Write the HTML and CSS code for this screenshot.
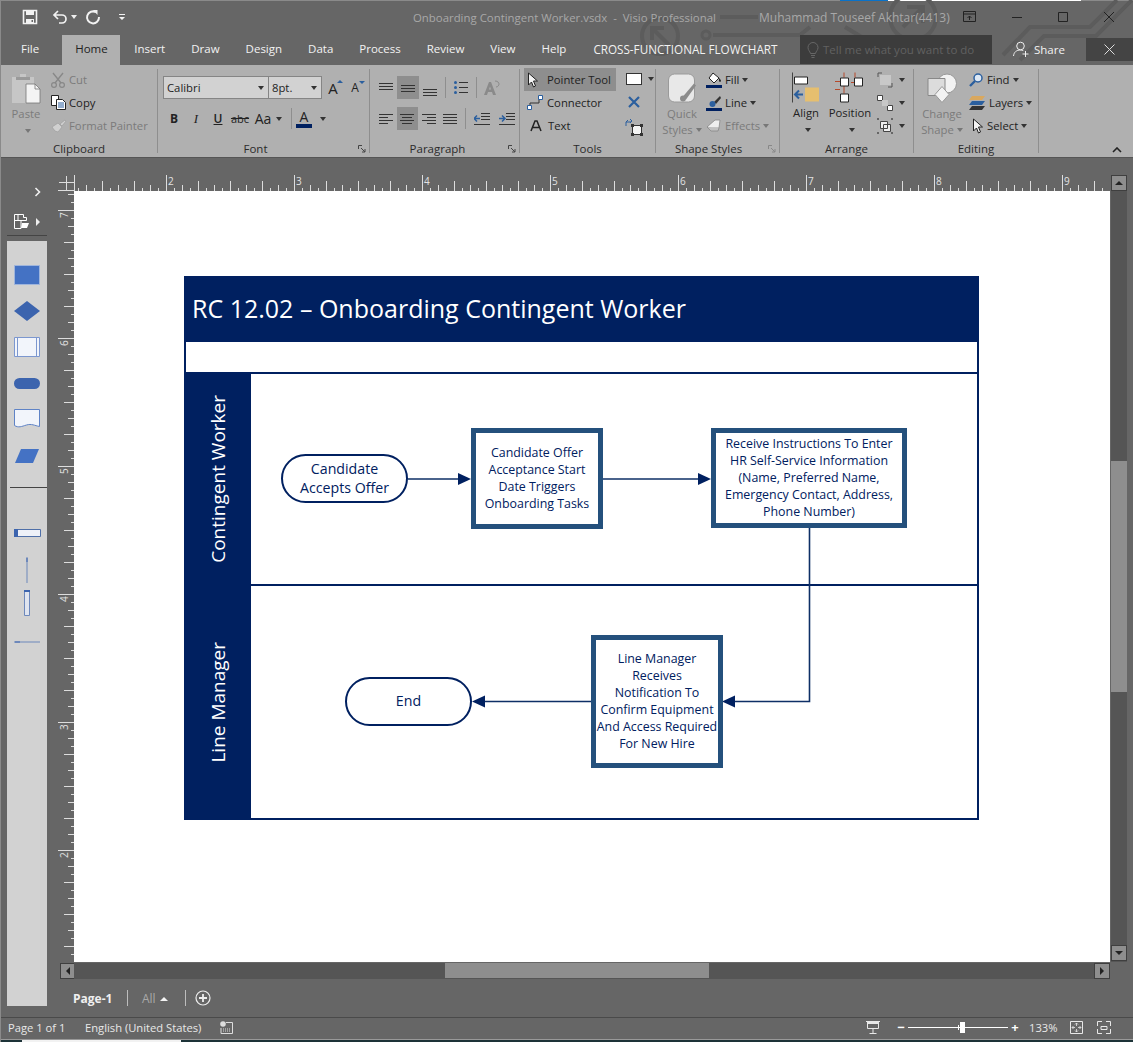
FILE: index.html
```html
<!DOCTYPE html>
<html lang="en">
<head>
    <meta charset="UTF-8">
    <title>Onboarding Contingent Worker.vsdx - Visio Professional</title>
    <link rel="stylesheet" href="styles.css">
</head>
<body>
<div class="app">
    <!-- title bar + tabs share the circuit pattern -->
    <header class="top">
        <svg class="circuit" width="1133" height="65" viewBox="0 0 1133 65">
            <g fill="none" stroke="#5c5c5c" stroke-width="4">
                <circle cx="660" cy="36" r="18"/>
                <path d="M669 45L654 30M652 40V28h12"/>
                <path d="M713 35h87l10-8M845 27l25 15M720 17h38"/>
                <circle cx="706" cy="35" r="4" stroke-width="3"/>
                <circle cx="913" cy="17" r="23"/>
                <path d="M903 27l20-20M907 7h16v16"/>
                <path d="M1003 55l27-28h60l27-27M1020 60l24-24h52l36-36"/>
            </g>
        </svg>
        <div class="titlebar">
            <div class="qat">
                <svg class="qat-save" width="16" height="16" viewBox="0 0 16 16"><path d="M1.500 1.500h13v13h-13z" fill="none" stroke="#f2f2f2" stroke-width="1.600"/><path d="M4 2h8v4H4zM4 10h8v4H4z" fill="#f2f2f2"/><path d="M9.500 11h1.500v2H9.500z" fill="#666"/></svg>
                <svg class="qat-undo" width="16" height="16" viewBox="0 0 16 16"><path d="M6 2L2 6l4 4M2 6h8a4 4 0 0 1 0 8H7" fill="none" stroke="#f2f2f2" stroke-width="1.700"/></svg>
                <span class="caret caret-light qat-caret"></span>
                <svg class="qat-redo" width="16" height="16" viewBox="0 0 16 16"><path d="M11 3.200A6 6 0 1 0 14 8" fill="none" stroke="#f2f2f2" stroke-width="2"/><path d="M8 1h4.500v5z" fill="#f2f2f2"/></svg>
                <svg class="qat-more" width="8" height="8" viewBox="0 0 8 8"><path d="M1 1h6v1H1zM1 4h6L4 7z" fill="#f2f2f2"/></svg>
            </div>
            <div class="doc-title">Onboarding Contingent Worker.vsdx&nbsp; - &nbsp;Visio Professional</div>
            <div class="user">Muhammad Touseef Akhtar(4413)</div>
            <div class="win-btns">
                <svg width="14" height="12" viewBox="0 0 14 12"><path d="M.5.500h12v10H.500zM.5 3h12M6.500 9V5M4.500 7l2-2 2 2" fill="none" stroke="#222" stroke-width="1"/></svg>
                <svg width="12" height="12" viewBox="0 0 12 12"><path d="M1 6.500h10" stroke="#222" stroke-width="1"/></svg>
                <svg width="12" height="12" viewBox="0 0 12 12"><path d="M1.500 1.500h9v9h-9z" fill="none" stroke="#222" stroke-width="1"/></svg>
                <svg width="12" height="12" viewBox="0 0 12 12"><path d="M1 1l10 10M11 1L1 11" stroke="#222" stroke-width="1"/></svg>
            </div>
        </div>
        <nav class="tabs">
            <a class="tab tab-file">File</a>
            <a class="tab tab-on">Home</a>
            <a class="tab">Insert</a>
            <a class="tab">Draw</a>
            <a class="tab">Design</a>
            <a class="tab">Data</a>
            <a class="tab">Process</a>
            <a class="tab">Review</a>
            <a class="tab">View</a>
            <a class="tab">Help</a>
            <a class="tab tab-ctx">CROSS-FUNCTIONAL FLOWCHART</a>
            <div class="tellme">
                <svg width="16" height="18" viewBox="0 0 16 18"><path d="M5.500 12.500C5 10 3 9.500 3 6.500a5 5 0 0 1 10 0c0 3-2 3.500-2.500 6zM6 14.500h4M6.500 16.500h3" fill="none" stroke="#666" stroke-width="1"/></svg>
                <span>Tell me what you want to do</span>
            </div>
            <div class="share">
                <svg width="17" height="17" viewBox="0 0 17 17"><circle cx="7.500" cy="5" r="3.800" fill="none" stroke="#f0f0f0" stroke-width="1"/><path d="M.5 15c.5-4 3-6 7-6 1 0 2 .2 2.800.6M12.500 10v6M9.500 13h6" fill="none" stroke="#f0f0f0" stroke-width="1"/></svg>
                <span>Share</span>
            </div>
            <div class="ribbon-close"><svg width="11" height="11" viewBox="0 0 11 11"><path d="M.5.500l10 10M10.500.500l-10 10" stroke="#ddd" stroke-width="1"/></svg></div>
        </nav>
    </header>

    <section class="ribbon">
        <div class="grp grp-clip">
            <div class="grp-body">
                <div class="big big-paste off">
                    <svg width="30" height="31" viewBox="0 0 30 31"><path d="M1 4h8V1h6v3h8v26H1z" fill="#c6c6c6"/><path d="M5 4h14v3H5z" fill="#9a9a9a"/><path d="M15 11h9l5 5v14H15z" fill="#f4f4f4" stroke="#777" stroke-width=".8"/><path d="M24 11v5h5" fill="none" stroke="#777" stroke-width=".8"/></svg>
                    <span>Paste</span>
                    <span class="caret"></span>
                </div>
                <div class="col col-clip">
                    <div class="cmd off">
                        <svg width="14" height="16" viewBox="0 0 14 16"><path d="M2 1l8 10M12 1L4 11" stroke="#888" stroke-width="1.400" fill="none"/><circle cx="3" cy="13" r="2.400" fill="none" stroke="#888" stroke-width="1.200"/><circle cx="11" cy="13" r="2.400" fill="none" stroke="#888" stroke-width="1.200"/></svg>
                        <span>Cut</span>
                    </div>
                    <div class="cmd">
                        <svg width="15" height="15" viewBox="0 0 15 15"><path d="M.5.500h7v10h-7z" fill="#fff" stroke="#222"/><path d="M5.500 4.500h6l3 3v7h-9z" fill="#fff" stroke="#222"/><path d="M7 8h6M7 10h6M7 12h6" stroke="#2b5f9e"/></svg>
                        <span>Copy</span>
                    </div>
                    <div class="cmd off">
                        <svg width="16" height="14" viewBox="0 0 16 14"><path d="M9 5l5-4 1 1-4 5zM1 8l6-4 4 4-4 5-3-1z" fill="#d0d0d0" stroke="#999" stroke-width=".6"/></svg>
                        <span>Format Painter</span>
                    </div>
                </div>
            </div>
            <div class="grp-name">Clipboard</div>
        </div>

        <div class="grp grp-font">
            <div class="grp-body font-body">
                <div class="font-row1">
                    <div class="combo combo-font">Calibri<span class="caret"></span></div>
                    <div class="combo combo-size">8pt.<span class="caret"></span></div>
                    <span class="grow"><b>A</b><i class="tri-up"></i></span>
                    <span class="grow grow-sm"><b>A</b><i class="tri-dn"></i></span>
                </div>
                <div class="font-row2">
                    <span class="fmt fmt-b">B</span>
                    <span class="fmt fmt-i">I</span>
                    <span class="fmt fmt-u">U</span>
                    <span class="fmt fmt-s">abc</span>
                    <span class="fmt fmt-aa">Aa</span><span class="caret"></span>
                    <span class="vsep"></span>
                    <span class="fmt-color">A</span><span class="caret"></span>
                </div>
            </div>
            <div class="grp-name">Font</div>
            <svg class="launch" width="8" height="8" viewBox="0 0 8 8"><path d="M.5 4V.5H4M3 3l4 4M7 4v3H4" fill="none" stroke="#444"/></svg>
        </div>

        <div class="grp grp-para">
            <div class="grp-body para-body">
                <div class="para-row">
                    <span class="al"><svg width="14" height="16" viewBox="0 0 14 16"><path d="M0 3.500h14M0 6.500h14M0 9.500h14" stroke="#333"/></svg></span>
                    <span class="al al-on"><svg width="14" height="16" viewBox="0 0 14 16"><path d="M0 5.500h14M0 8.500h14M0 11.500h14" stroke="#333"/></svg></span>
                    <span class="al"><svg width="14" height="16" viewBox="0 0 14 16"><path d="M0 9.500h14M0 12.500h14M0 15.500h14" stroke="#333"/></svg></span>
                    <span class="vsep"></span>
                    <span class="al"><svg width="14" height="14" viewBox="0 0 14 14"><path d="M5 1.500h9M5 6.500h9M5 11.500h9" stroke="#333"/><circle cx="1.500" cy="1.500" r="1.500" fill="#2b5f9e"/><circle cx="1.500" cy="6.500" r="1.500" fill="#2b5f9e"/><circle cx="1.500" cy="11.500" r="1.500" fill="#2b5f9e"/></svg></span>
                    <span class="vsep"></span>
                    <span class="al al-rot"><svg width="16" height="16" viewBox="0 0 16 16"><path d="M0 15L5 2h2l5 13h-3l-1-3H4l-1 3zM5 9.500h2L6 6.500z" fill="#8a8a8a"/><path d="M11 1c3 0 4 2 4 3s-1 3-3 3" fill="none" stroke="#8a8a8a"/></svg></span>
                </div>
                <div class="para-row">
                    <span class="al"><svg width="14" height="14" viewBox="0 0 14 14"><path d="M0 2.500h14M0 5.500h9M0 8.500h14M0 11.500h9" stroke="#333"/></svg></span>
                    <span class="al al-on"><svg width="14" height="14" viewBox="0 0 14 14"><path d="M0 2.500h14M2 5.500h10M0 8.500h14M2 11.500h10" stroke="#333"/></svg></span>
                    <span class="al"><svg width="14" height="14" viewBox="0 0 14 14"><path d="M0 2.500h14M5 5.500h9M0 8.500h14M5 11.500h9" stroke="#333"/></svg></span>
                    <span class="al"><svg width="14" height="14" viewBox="0 0 14 14"><path d="M0 2.500h14M0 5.500h14M0 8.500h14M0 11.500h14" stroke="#333"/></svg></span>
                    <span class="vsep"></span>
                    <span class="al al-ind"><svg width="16" height="14" viewBox="0 0 16 14"><path d="M7 1.500h9M7 4.500h9M7 7.500h9M0 12.500h16" stroke="#333"/><path d="M0 6.500h6M3 3.500l-3 3 3 3" fill="none" stroke="#2b5f9e" stroke-width="1.500"/></svg></span>
                    <span class="al al-ind"><svg width="16" height="14" viewBox="0 0 16 14"><path d="M7 1.500h9M7 4.500h9M7 7.500h9M0 12.500h16" stroke="#333"/><path d="M0 6.500h6M3 3.500l3 3-3 3" fill="none" stroke="#2b5f9e" stroke-width="1.500"/></svg></span>
                </div>
            </div>
            <div class="grp-name">Paragraph</div>
            <svg class="launch" width="8" height="8" viewBox="0 0 8 8"><path d="M.5 4V.5H4M3 3l4 4M7 4v3H4" fill="none" stroke="#444"/></svg>
        </div>

        <div class="grp grp-tools">
            <div class="grp-body">
                <div class="col col-tools">
                    <div class="cmd cmd-on">
                        <svg width="12" height="16" viewBox="0 0 12 16"><path d="M1.500 1v12l3-3 2 5 2-1-2-5h4z" fill="#f4f4f4" stroke="#222"/></svg>
                        <span>Pointer Tool</span>
                    </div>
                    <div class="cmd">
                        <svg width="16" height="16" viewBox="0 0 16 16"><path d="M3 12V8h9V4" fill="none" stroke="#333"/><path d="M.5 10.500h4v4h-4zM11.500.500h4v4h-4z" fill="#fff" stroke="#2b5f9e"/></svg>
                        <span>Connector</span>
                    </div>
                    <div class="cmd">
                        <svg width="12" height="12" viewBox="0 0 12 12"><path d="M1 11L5 1h2l4 10M3 7.500h6" fill="none" stroke="#222" stroke-width="1.500"/></svg>
                        <span>Text</span>
                    </div>
                </div>
                <div class="col col-tool2">
                    <div class="swatch-row"><span class="swatch"></span><span class="caret"></span></div>
                    <svg width="14" height="12" viewBox="0 0 14 12"><path d="M2 1l10 10M12 1L2 11" stroke="#2b5f9e" stroke-width="2.200"/></svg>
                    <svg width="18" height="18" viewBox="0 0 18 18"><path d="M7.500 7.500h9v9h-9z" fill="#f4f4f4" stroke="#333"/><path d="M6 6h3v3H6zM15 6h3v3h-3zM6 15h3v3H6zM15 15h3v3h-3z" fill="#333"/><path d="M1 8V4h5M3 2L1 4M5 1l2 2-2 2" fill="none" stroke="#2b5f9e"/></svg>
                </div>
            </div>
            <div class="grp-name">Tools</div>
        </div>

        <div class="grp grp-styles">
            <div class="grp-body">
                <div class="big big-quick off">
                    <svg width="29" height="30" viewBox="0 0 29 30"><rect x=".5" y=".5" width="26" height="28" rx="6" fill="#e8e8e8" stroke="#9a9a9a"/><path d="M26 10L15 23l3 3 10-14z" fill="#8c8c8c"/><circle cx="15" cy="25" r="3" fill="#8c8c8c"/></svg>
                    <span class="big-l1">Quick</span>
                    <span>Styles<i class="caret"></i></span>
                </div>
                <div class="col col-styles">
                    <div class="cmd">
                        <svg width="16" height="16" viewBox="0 0 16 16"><path d="M7 1l6 5-5 5-5-5z" fill="#fff" stroke="#222"/><path d="M13 6c1 1 2 2 2 3 0 1-2 1-2 0z" fill="#222"/><path d="M0 13h16v3H0z" fill="#002060"/></svg>
                        <span>Fill<i class="caret"></i></span>
                    </div>
                    <div class="cmd">
                        <svg width="16" height="16" viewBox="0 0 16 16"><path d="M14 1L8 7l2 2 5-6z" fill="#333"/><circle cx="6.500" cy="9" r="3" fill="#2b5f9e"/><path d="M0 13h16v3H0z" fill="#002060"/></svg>
                        <span>Line<i class="caret"></i></span>
                    </div>
                    <div class="cmd off">
                        <svg width="16" height="14" viewBox="0 0 16 14"><path d="M1 8l8-7h5l-1 8H5z" fill="#eee" stroke="#888" stroke-width=".8"/><path d="M1 8l4 4h7l1-3" fill="#c0c0c0" stroke="#888" stroke-width=".8"/></svg>
                        <span>Effects<i class="caret"></i></span>
                    </div>
                </div>
            </div>
            <div class="grp-name">Shape Styles</div>
            <svg class="launch launch-off" width="8" height="8" viewBox="0 0 8 8"><path d="M.5 4V.5H4M3 3l4 4M7 4v3H4" fill="none" stroke="#888"/></svg>
        </div>

        <div class="grp grp-arrange">
            <div class="grp-body">
                <div class="big big-align">
                    <svg width="28" height="30" viewBox="0 0 28 30"><path d="M.5 0v30" stroke="#444"/><path d="M2.500 4.500h13v7h-13z" fill="#fff" stroke="#222"/><path d="M13 15h14v14H13z" fill="#e6bf6f"/><path d="M3 22h8M7 18l-4 4 4 4" fill="none" stroke="#2b5f9e" stroke-width="2"/></svg>
                    <span>Align</span>
                    <span class="caret"></span>
                </div>
                <div class="big big-pos">
                    <svg width="30" height="30" viewBox="0 0 30 30"><path d="M9 0v5M20 0v5M0 9h5M0 17h5M9 13v8M16 10h4" stroke="#b5482a" fill="none"/><path d="M5.500 5.500h8v8h-8zM19.500 5.500h8v8h-8zM5.500 21.500h8v8h-8z" fill="#fff" stroke="#222"/></svg>
                    <span>Position</span>
                    <span class="caret"></span>
                </div>
                <div class="col col-arr">
                    <div class="mini"><svg width="16" height="16" viewBox="0 0 16 16"><path d="M1 1h4M1 1v4M15 15h-4M15 15v-4" stroke="#555" fill="none"/><path d="M3 3h11v10H3z" fill="#c8c8c8"/></svg><span class="caret"></span></div>
                    <div class="mini"><svg width="16" height="16" viewBox="0 0 16 16"><path d="M.5.500h5v5h-5zM10.500 10.500h5v5h-5z" fill="#fff" stroke="#444"/><path d="M5 5h6v6H5z" fill="#c8c8c8"/></svg><span class="caret"></span></div>
                    <div class="mini"><svg width="16" height="16" viewBox="0 0 16 16"><path d="M3.500 3.500h7v7h-7zM6.500 6.500h7v7h-7z" fill="#eee" stroke="#444"/><path d="M0 0h2v2H0zM14 0h2v2h-2zM0 14h2v2H0zM14 14h2v2h-2z" fill="#666"/></svg><span class="caret"></span></div>
                </div>
            </div>
            <div class="grp-name">Arrange</div>
        </div>

        <div class="grp grp-edit">
            <div class="grp-body">
                <div class="big big-shape off">
                    <svg width="30" height="30" viewBox="0 0 30 30"><circle cx="20" cy="10" r="9.500" fill="#f2f2f2" stroke="#999"/><path d="M1 5h17v17H1z" fill="#dcdcdc" stroke="#888"/><path d="M15 13l7 8-7 8-7-8z" fill="#f2f2f2" stroke="#999"/></svg>
                    <span class="big-l1">Change</span>
                    <span>Shape<i class="caret"></i></span>
                </div>
                <div class="col col-edit">
                    <div class="cmd">
                        <svg width="14" height="14" viewBox="0 0 14 14"><circle cx="9" cy="5" r="4" fill="#dde8f5" stroke="#2b5f9e" stroke-width="1.500"/><path d="M6 8l-5 5" stroke="#2b5f9e" stroke-width="2.400"/></svg>
                        <span>Find<i class="caret"></i></span>
                    </div>
                    <div class="cmd">
                        <svg width="16" height="14" viewBox="0 0 16 14"><path d="M3 0h13l-3 4H0z" fill="#d9a85f"/><path d="M3 5h13l-3 4H0z" fill="#2b5f9e"/><path d="M3 10h13l-3 4H0z" fill="#333"/></svg>
                        <span>Layers<i class="caret"></i></span>
                    </div>
                    <div class="cmd">
                        <svg width="12" height="16" viewBox="0 0 12 16"><path d="M1.500 1v12l3-3 2 5 2-1-2-5h4z" fill="#f4f4f4" stroke="#222"/></svg>
                        <span>Select<i class="caret"></i></span>
                    </div>
                </div>
            </div>
            <div class="grp-name">Editing</div>
        </div>

        <svg class="collapse" width="10" height="6" viewBox="0 0 10 6"><path d="M1 5l4-4 4 4" fill="none" stroke="#222" stroke-width="1.600"/></svg>
    </section>

    <main class="main">
        <aside class="side">
            <svg class="side-more" width="8" height="10" viewBox="0 0 8 10"><path d="M1.500 1l4 4-4 4" fill="none" stroke="#f0f0f0" stroke-width="1.600"/></svg>
            <div class="side-head">
                <svg width="16" height="16" viewBox="0 0 16 16"><path d="M.5.500h9v3h3v3H7v8H.5zM.5 6.500H7" fill="none" stroke="#fff"/><path d="M8 9h7l-2 5H7z" fill="#fff"/><path d="M4 1v5" stroke="#fff"/></svg>
                <i class="tri-right"></i>
            </div>
            <div class="stencil">
                <svg class="st st-1" width="26" height="20" viewBox="0 0 26 20"><path d="M.5.500h25v19H.5z" fill="#4472c4" stroke="#9fb5dc"/></svg>
                <svg class="st st-2" width="26" height="20" viewBox="0 0 26 20"><path d="M13 0l13 10-13 10L0 10z" fill="#3c64ae"/></svg>
                <svg class="st st-3" width="26" height="20" viewBox="0 0 26 20"><path d="M.5.500h25v19H.5z" fill="#f2f5fb" stroke="#7c97cf"/><path d="M3.500 1v18M22.500 1v18" stroke="#7c97cf"/></svg>
                <svg class="st st-4" width="26" height="11" viewBox="0 0 26 11"><rect width="26" height="11" rx="5.500" fill="#3c64ae"/></svg>
                <svg class="st st-5" width="26" height="20" viewBox="0 0 26 20"><path d="M.5.500h25v17c-5-1-8-3-13-1.500s-8 3-12 .5z" fill="#f2f5fb" stroke="#5f83c6"/></svg>
                <svg class="st st-6" width="24" height="14" viewBox="0 0 24 14"><path d="M6 0h18l-6 14H0z" fill="#4472c4"/></svg>
                <div class="st-sep"></div>
                <svg class="st st-7" width="27" height="8" viewBox="0 0 27 8"><path d="M.5.500h26v7H.5z" fill="#eef1f8" stroke="#4f6fa8"/><path d="M0 0h4v8H0z" fill="#3c64ae"/></svg>
                <svg class="st st-8" width="4" height="26" viewBox="0 0 4 26"><path d="M2 0v26" stroke="#6d88bb"/><path d="M1 1h2v4H1z" fill="#6d88bb"/></svg>
                <svg class="st st-9" width="8" height="26" viewBox="0 0 8 26"><path d="M1.500 .5h5v25h-5z" fill="#dfe4ef" stroke="#6d88bb"/><path d="M1 0h6v2H1z" fill="#3c64ae"/></svg>
                <svg class="st st-10" width="26" height="4" viewBox="0 0 26 4"><path d="M0 2h26" stroke="#6d88bb"/><path d="M1 1h5v2H1z" fill="#6d88bb"/></svg>
            </div>
        </aside>

        <div class="work">
            <div class="corner">
                <svg width="16" height="16" viewBox="0 0 16 16"><path d="M8.500 1v15M1 7.500h15" stroke="#ddd"/></svg>
            </div>
            <div class="ruler-h"><span>2</span><span>3</span><span>4</span><span>5</span><span>6</span><span>7</span><span>8</span><span>9</span></div>
            <div class="scroll-btn scroll-up"><i class="tri-up-d"></i></div>

            <div class="ruler-v"><span>7</span><span>6</span><span>5</span><span>4</span><span>3</span><span>2</span></div>
            <div class="page">
                <div class="chart">
                    <div class="chart-title">RC 12.02 – Onboarding Contingent Worker</div>
                    <div class="chart-band"></div>
                    <div class="lane lane-a">
                        <div class="lane-name"><span>Contingent Worker</span></div>
                    </div>
                    <div class="lane lane-b">
                        <div class="lane-name"><span>Line Manager</span></div>
                    </div>

                    <svg class="wires" width="795" height="544" viewBox="0 0 795 544">
                        <g fill="none" stroke="#0e2f66" stroke-width="1.600">
                            <path d="M224 203h54"/>
                            <path d="M419 203h97"/>
                            <path d="M625.500 251v174.500h-80"/>
                            <path d="M407 425.500H300"/>
                        </g>
                        <g fill="#002060">
                            <path d="M287 203l-13-6v12z"/>
                            <path d="M527 203l-13-6v12z"/>
                            <path d="M538 425.500l13-6v12z"/>
                            <path d="M288 425.500l13-6v12z"/>
                        </g>
                    </svg>

                    <div class="node term term-start">Candidate<br>Accepts Offer</div>
                    <div class="node proc proc-1">Candidate Offer<br>Acceptance Start<br>Date Triggers<br>Onboarding Tasks</div>
                    <div class="node proc proc-2">Receive Instructions To Enter<br>HR Self-Service Information<br>(Name, Preferred Name,<br>Emergency Contact, Address,<br>Phone Number)</div>
                    <div class="node proc proc-3">Line Manager<br>Receives<br>Notification To<br>Confirm Equipment<br>And Access Required<br>For New Hire</div>
                    <div class="node term term-end">End</div>
                </div>
            </div>
            <div class="scroll-v"><div class="thumb-v"></div></div>

            <div class="scroll-btn scroll-left"><i class="tri-left-d"></i></div>
            <div class="scroll-h"><div class="thumb-h"></div></div>
            <div class="scroll-btn scroll-right"><i class="tri-right-d"></i></div>
            <div class="scroll-btn scroll-down"><i class="tri-down-d"></i></div>

            <div class="pagetabs">
                <span class="page-name">Page-1</span>
                <span class="tab-sep"></span>
                <span class="page-all">All<i class="tri-up-w"></i></span>
                <span class="tab-sep"></span>
                <svg width="16" height="16" viewBox="0 0 16 16"><circle cx="8" cy="8" r="7" fill="none" stroke="#eee" stroke-width="1.200"/><path d="M8 4v8M4 8h8" stroke="#eee" stroke-width="1.800"/></svg>
            </div>
        </div>
    </main>

    <footer class="status">
        <span class="st-page">Page 1 of 1</span>
        <span class="st-lang">English (United States)</span>
        <svg class="st-cal" width="13" height="13" viewBox="0 0 13 13"><circle cx="3" cy="3" r="2.800" fill="#ddd"/><path d="M6 1.500h6.500v11H1V7" fill="none" stroke="#ddd"/><path d="M3 8h8M3 10h8" stroke="#ddd" stroke-dasharray="1 1"/></svg>
        <div class="st-right">
            <svg width="14" height="13" viewBox="0 0 14 13"><path d="M0 .5h14M1.500 1v6.500h11V1M7 8v4M3.500 12.500h7" fill="none" stroke="#e8e8e8" stroke-width="1"/><path d="M1 1h12v2H1z" fill="#e8e8e8"/></svg>
            <div class="zoom">
                <span class="z-btn">−</span>
                <div class="z-track"><i class="z-mid"></i><i class="z-thumb"></i></div>
                <span class="z-btn">+</span>
            </div>
            <span class="z-val">133%</span>
            <svg width="13" height="13" viewBox="0 0 13 13"><path d="M.5.500h12v12H.500z" fill="none" stroke="#e8e8e8"/><path d="M6.500 2v3M5 3.500L6.500 2 8 3.500M6.500 11V8M5 9.500L6.500 11 8 9.500M2 6.500h3M3.500 5L2 6.500 3.500 8M11 6.500H8M9.500 5L11 6.500 9.500 8" fill="none" stroke="#e8e8e8" stroke-width=".8"/></svg>
            <svg width="14" height="13" viewBox="0 0 14 13"><path d="M5 .5H.5V5M9 .5h4.500V5M.5 8v4.500H5M13.500 8v4.500H9" fill="none" stroke="#e8e8e8"/><path d="M4 5.500h6v3H4z" fill="none" stroke="#e8e8e8"/></svg>
        </div>
    </footer>
    <div class="desk"></div>
</div>
</body>
</html>
```

FILE: styles.css
```css
* {
    margin: 0;
    padding: 0;
    box-sizing: border-box;
}
html, body {
    width: 1133px;
    height: 1042px;
    overflow: hidden;
}
body {
    background: #666;
    font-family: "Open Sans", "Liberation Sans", sans-serif;
    font-size: 12px;
    color: #222;
}
i {
    font-style: normal;
}
.app {
    width: 1133px;
    height: 1042px;
    background: #666;
    border-left: 1px solid #8a8a8a;
    display: flex;
    flex-direction: column;
}

/* carets and little triangles */
.caret {
    display: inline-block;
    width: 0;
    height: 0;
    border-left: 3.500px solid transparent;
    border-right: 3.500px solid transparent;
    border-top: 4px solid #333;
}
.caret-light {
    border-top-color: #eee;
}
.off .caret {
    border-top-color: #777;
}

/* top */
.top {
    position: relative;
    height: 65px;
    flex: none;
    padding-top: 1px;
    /* sliver of the windows behind along the top edge */
    background: linear-gradient(90deg, #8a8a8a 839px, #0a72c8 839px 887px, #fff 887px 1080px, #8a8a8a 1080px) 0 0 / 100% 1px no-repeat;
}
.circuit {
    position: absolute;
    left: -1px;
    top: 0;
}
.titlebar {
    position: relative;
    height: 34px;
    padding-bottom: 2px;
    display: flex;
    align-items: center;
}
.qat {
    display: flex;
    align-items: center;
    width: 412px;
    padding-left: 21px;
}
.qat-undo {
    margin-left: 14px;
}
.qat-caret {
    margin-left: 3px;
}
.qat-redo {
    margin-left: 8px;
}
.qat-more {
    margin-left: 17px;
}
.doc-title {
    width: 346px;
    color: #a8a8a8;
    font-size: 11.400px;
    white-space: nowrap;
}
.user {
    width: 204px;
    color: #a8a8a8;
    white-space: nowrap;
}
.win-btns {
    display: flex;
    align-items: center;
    gap: 34px;
}
.tabs {
    position: relative;
    height: 30px;
    display: flex;
    align-items: stretch;
    padding-left: 7px;
    color: #f2f2f2;
    font-size: 11.500px;
}
.tab {
    padding: 0 13px;
    line-height: 28px;
    white-space: nowrap;
}
.tab-on {
    background: #b0b0b0;
    color: #222;
    width: 58px;
    text-align: center;
    margin-left: 10px;
    margin-right: 1px;
}
.tab-ctx {
    font-size: 11.700px;
    margin-left: 1px;
}
.tellme {
    position: absolute;
    left: 799px;
    top: 0;
    width: 192px;
    height: 29px;
    background: #3c3c3c;
    color: #616161;
    display: flex;
    align-items: center;
    gap: 2px;
    padding-left: 5px;
    white-space: nowrap;
}
.share {
    position: absolute;
    left: 1012px;
    top: 0;
    height: 28px;
    display: flex;
    align-items: center;
    gap: 4px;
}
.ribbon-close {
    position: absolute;
    left: 1085px;
    top: 3px;
    width: 47px;
    height: 23px;
    background: #444;
    display: flex;
    align-items: center;
    justify-content: center;
}

/* ribbon */
.ribbon {
    position: relative;
    flex: none;
    height: 93px;
    background: #b0b0b0;
    border-bottom: 1px solid #555;
    display: flex;
    align-items: flex-start;
    font-size: 11.300px;
}
.grp {
    position: relative;
    height: 84px;
    margin-top: 4px;
    display: flex;
    flex-direction: column;
    border-right: 1px solid #8e8e8e;
}
.grp-body {
    height: 72px;
    flex: none;
    margin-top: -4px;
    padding-top: 3px;
    display: flex;
}
.grp-name {
    flex: none;
    margin-top: 3px;
    text-align: center;
    font-size: 11.500px;
    line-height: 18px;
    color: #2b2b2b;
}
.grp-font .grp-name { padding-right: 16px; }
.grp-para .grp-name { padding-right: 14px; }
.grp-styles .grp-name { padding-right: 18px; }
.grp-clip { width: 157px; }
.grp-font { width: 212px; }
.grp-para { width: 150px; }
.grp-tools { width: 136px; }
.grp-styles { width: 124px; }
.grp-arrange { width: 134px; }
.grp-edit { width: 125px; }
.launch {
    position: absolute;
    right: 3px;
    bottom: 0;
}
.col {
    display: flex;
    flex-direction: column;
}
.cmd {
    height: 23px;
    display: flex;
    align-items: center;
    gap: 4px;
    white-space: nowrap;
}
.cmd svg {
    flex: none;
}
.cmd .caret {
    margin-left: 3px;
    vertical-align: 2px;
}
.off, .off span {
    color: #7b7b7b;
}
.big {
    display: flex;
    flex-direction: column;
    align-items: center;
    white-space: nowrap;
    line-height: 16px;
}
.big svg {
    height: 31px;
    margin-bottom: 2px;
    flex: none;
}
.big > .caret {
    margin-top: 7px;
}
.big .caret {
    margin-left: 3px;
    vertical-align: 2px;
}

.big-paste {
    width: 48px;
    padding-top: 5px;
    margin-left: 1px;
}
.col-clip {
    margin-left: 1px;
}
.col-clip .cmd:nth-child(2) {
    gap: 3px;
}
.col-clip .cmd:nth-child(3) {
    gap: 2px;
}
.font-body {
    flex-direction: column;
    padding: 11px 0 0 5px;
}
.font-row1 {
    display: flex;
    align-items: center;
    height: 23px;
}
.combo {
    height: 23px;
    background: #d2d2d2;
    border: 1px solid #858585;
    display: flex;
    align-items: center;
    justify-content: space-between;
    padding: 0 4px 0 3px;
}
.combo-font {
    width: 106px;
}
.combo-size {
    width: 54px;
    margin-left: -1px;
}
.grow {
    position: relative;
    width: 22px;
    margin-left: 0;
    text-align: center;
}
.grow b {
    font-weight: 400;
    font-size: 15px;
}
.grow-sm b {
    font-size: 12px;
}
.tri-up, .tri-dn {
    position: absolute;
    right: 1px;
    top: 2px;
    border-left: 3px solid transparent;
    border-right: 3px solid transparent;
}
.tri-up {
    border-bottom: 3px solid #2b5f9e;
}
.tri-dn {
    border-top: 3px solid #2b5f9e;
}
.font-row2 {
    display: flex;
    align-items: center;
    height: 23px;
    margin-top: 8px;
    padding-left: 0;
}
.fmt {
    width: 22px;
    text-align: center;
    font-size: 12px;
}
.fmt-b { font-weight: 700; }
.fmt-i { font-style: italic; font-family: "Liberation Serif", serif; font-size: 13px; }
.fmt-u { font-weight: 600; text-decoration: underline; }
.fmt-s { text-decoration: line-through; font-size: 11px; }
.fmt-aa { font-size: 14px; margin-left: 1px; margin-right: 2px; }
.vsep {
    width: 1px;
    height: 21px;
    background: #8e8e8e;
}
.font-row2 .vsep {
    margin: 0 4px 0 9px;
}
.fmt-color {
    width: 16px;
    margin-right: 8px;
    text-align: center;
    font-size: 14px;
    line-height: 14px;
    border-bottom: 4px solid #002060;
}

.para-body {
    flex-direction: column;
    padding: 11px 0 0 5px;
}
.para-row {
    display: flex;
    align-items: center;
    height: 23px;
}
.para-row + .para-row {
    margin-top: 8px;
}
.al {
    width: 22px;
    height: 23px;
    display: flex;
    align-items: center;
    justify-content: center;
}
.al-on {
    background: #8e8e8e;
}
.para-row .vsep {
    margin: 0 4px;
}
.al-ind {
    width: 25px;
}

.col-tools {
    margin-left: 4px;
    width: 96px;
}
.cmd-on {
    background: #8e8e8e;
    width: 92px;
}
.col-tools .cmd {
    padding-left: 3px;
    gap: 8px;
}
.col-tools .cmd:nth-child(2) {
    padding-left: 3px;
    gap: 4px;
}
.col-tools .cmd:nth-child(3) {
    padding-left: 6px;
    gap: 6px;
}
.col-tool2 {
    height: 69px;
    align-items: center;
    justify-content: space-between;
    padding: 5px 0 1px;
    width: 30px;
    margin-left: -1px;
}
.swatch-row {
    display: flex;
    align-items: center;
    gap: 6px;
    margin-left: 11px;
}
.swatch {
    width: 16px;
    height: 12px;
    background: #fff;
    border: 1px solid #333;
}

.big-quick {
    width: 42px;
    margin-left: 5px;
    padding-top: 5px;
}
.col-styles {
    margin-left: 3px;
}
.col-styles .cmd {
    gap: 3px;
}

.big-align {
    width: 36px;
    margin-left: 8px;
    padding-top: 4px;
}
.big-pos {
    width: 48px;
    margin-left: 2px;
    padding-top: 4px;
}
.col-arr {
    margin-left: 3px;
}
.mini {
    height: 23px;
    display: flex;
    align-items: center;
    gap: 6px;
}
.big-shape {
    width: 46px;
    margin-left: 5px;
    padding-top: 5px;
}
.col-edit {
    margin-left: 4px;
}
.col-edit .cmd {
    gap: 4px;
}
.col-edit .cmd:nth-child(3) {
    padding-left: 3px;
    gap: 3px;
}
.collapse {
    position: absolute;
    right: 11px;
    bottom: 4px;
}

/* main area */
.main {
    flex: 1;
    min-height: 0;
    display: flex;
}
.side {
    width: 57px;
    flex: none;
    position: relative;
    display: flex;
    flex-direction: column;
}
.side-more {
    margin: 29px 0 0 33px;
}
.side-head {
    margin: 12px 0 0 6px;
    width: 40px;
    height: 27px;
    padding: 5px 0 0 7px;
    display: flex;
    gap: 6px;
    border-bottom: 1px solid #444;
}
.tri-right {
    margin-top: 4px;
    border-top: 4px solid transparent;
    border-bottom: 4px solid transparent;
    border-left: 4px solid #eee;
    height: 8px;
}
.stencil {
    margin: 5px 0 0 6px;
    width: 40px;
    height: 765px;
    background: #d2d2d2;
    display: flex;
    flex-direction: column;
    align-items: center;
}
.st {
    flex: none;
    display: block;
}
.st-1 { margin-top: 24px; }
.st-2 { margin-top: 16px; }
.st-3 { margin-top: 16px; }
.st-4 { margin-top: 21px; }
.st-5 { margin-top: 20px; }
.st-6 { margin-top: 20px; }
.st-sep {
    width: 37px;
    height: 1px;
    background: #444;
    margin: 24px 0 0 2px;
}
.st-7 { margin-top: 41px; }
.st-8 { margin-top: 20px; }
.st-9 { margin-top: 7px; }
.st-10 { margin-top: 24px; }

.work {
    flex: 1;
    display: grid;
    grid-template-columns: 16px 16px 1020px 17px 5px;
    grid-template-rows: 16px 771px 17px 38px;
    margin-top: 17px;
}
.corner {
    grid-column: 1;
    grid-row: 1;
    border-bottom: 1px solid #ddd;
}
.corner svg {
    display: block;
}
.ruler-h {
    grid-column: 2 / 4;
    grid-row: 1;
    display: flex;
    padding-left: 91px;
    overflow: hidden;
    color: #e2e2e2;
    font-size: 10px;
    line-height: 13px;
    background:
        linear-gradient(90deg, #ddd 1px, transparent 1px) 91px 100% / 128px 16px repeat-x,
        linear-gradient(90deg, #ddd 1px, transparent 1px) 27px 100% / 32px 10px repeat-x,
        linear-gradient(90deg, #ddd 1px, transparent 1px) 11px 100% / 16px 6px repeat-x,
        linear-gradient(90deg, #ddd 1px, transparent 1px) 3px 100% / 8px 3px repeat-x;
    border-left: 1px solid #ddd;
}
.ruler-h span {
    flex: none;
    width: 128px;
    padding-left: 2px;
}
.scroll-btn {
    width: 16px;
    height: 16px;
    background: #8e8e8e;
    border: 1px solid #3f3f3f;
    display: flex;
    align-items: center;
    justify-content: center;
}
.scroll-up {
    grid-column: 4;
    grid-row: 1;
    margin-left: 1px;
}
.tri-up-d, .tri-down-d {
    border-left: 4.500px solid transparent;
    border-right: 4.500px solid transparent;
}
.tri-up-d { border-bottom: 4px solid #222; }
.tri-down-d { border-top: 4px solid #222; }
.tri-left-d, .tri-right-d {
    border-top: 4.500px solid transparent;
    border-bottom: 4.500px solid transparent;
}
.tri-left-d { border-right: 4px solid #222; }
.tri-right-d { border-left: 4px solid #222; }
.ruler-v {
    grid-column: 1;
    grid-row: 2;
    display: flex;
    flex-direction: column;
    padding-top: 19px;
    overflow: hidden;
    color: #e2e2e2;
    font-size: 10px;
    background:
        linear-gradient(#ddd 1px, transparent 1px) 0 19px / 16px 128px repeat-y,
        linear-gradient(#ddd 1px, transparent 1px) 100% 19px / 10px 32px repeat-y,
        linear-gradient(#ddd 1px, transparent 1px) 100% 3px / 6px 16px repeat-y,
        linear-gradient(#ddd 1px, transparent 1px) 100% 3px / 3px 8px repeat-y;
}
.ruler-v span {
    flex: none;
    height: 128px;
    width: 13px;
    writing-mode: vertical-rl;
    transform: rotate(180deg);
    text-align: right;
    line-height: 13px;
    padding-bottom: 2px;
}
.page {
    grid-column: 2 / 4;
    grid-row: 2;
    background: #fff;
    padding: 85px 0 0 110px;
    overflow: hidden;
}

/* the flowchart */
.chart {
    position: relative;
    width: 795px;
    height: 544px;
    color: #002060;
    font-size: 12.400px;
    line-height: 17px;
}
.chart-title {
    height: 66px;
    background: #002060;
    color: #fff;
    font-size: 25px;
    line-height: 64px;
    padding-left: 8px;
    white-space: nowrap;
}
.chart-band {
    height: 30px;
    border: 2px solid #002060;
    border-top: 0;
    border-bottom: 0;
}
.lane {
    display: flex;
    border: 2px solid #002060;
    border-bottom: 0;
}
.lane-a {
    height: 212px;
}
.lane-b {
    height: 236px;
    border-bottom: 2px solid #002060;
}
.lane-name {
    width: 65px;
    background: #002060;
    color: #fff;
    font-size: 19px;
    display: flex;
    align-items: center;
    justify-content: center;
    white-space: nowrap;
}
.lane-name span {
    writing-mode: vertical-rl;
    transform: rotate(180deg);
}
.wires {
    position: absolute;
    left: 0;
    top: 0;
}
.node {
    position: absolute;
    background: #fff;
    display: flex;
    align-items: center;
    justify-content: center;
    text-align: center;
    white-space: nowrap;
    padding-bottom: 2px;
}
.term {
    border: 2px solid #002060;
    border-radius: 25px;
    font-size: 14.200px;
    line-height: 19px;
}
.proc {
    border: 5px solid #24507c;
}
.term-start { left: 97px; top: 178px; width: 127px; height: 49px; }
.term-end { left: 161px; top: 401px; width: 127px; height: 49px; }
.proc-1 { left: 287px; top: 152px; width: 132px; height: 101px; }
.proc-2 { left: 527px; top: 152px; width: 196px; height: 100px; }
.proc-3 { left: 407px; top: 359px; width: 132px; height: 133px; }

/* scrollbars */
.scroll-v {
    grid-column: 4;
    grid-row: 2;
    margin-left: 1px;
    background: #555;
    padding-top: 270px;
}
.thumb-v {
    height: 231px;
    background: #8e8e8e;
}
.scroll-down {
    grid-column: 4;
    grid-row: 2;
    align-self: end;
    position: relative;
    margin: 0 0 1px 1px;
}
.scroll-left {
    grid-column: 1;
    grid-row: 3;
    margin: 1px 0 0 2px;
}
.scroll-h {
    grid-column: 2 / 4;
    grid-row: 3;
    margin-top: 1px;
    background: #555;
    padding-left: 371px;
}
.thumb-h {
    width: 264px;
    height: 15px;
    background: #8e8e8e;
}
.scroll-right {
    grid-column: 3;
    grid-row: 3;
    justify-self: end;
    position: relative;
    margin-top: 1px;
}
.pagetabs {
    grid-column: 1 / 6;
    grid-row: 4;
    display: flex;
    align-items: center;
    padding-left: 15px;
    color: #f0f0f0;
}
.page-name {
    font-weight: 700;
    width: 54px;
}
.tab-sep {
    width: 1px;
    height: 16px;
    background: #bdbdbd;
}
.page-all {
    color: #a9a9a9;
    width: 57px;
    padding-left: 14px;
}
.tri-up-w {
    display: inline-block;
    margin-left: 4px;
    vertical-align: 2px;
    border-left: 4px solid transparent;
    border-right: 4px solid transparent;
    border-bottom: 4px solid #f4f4f4;
}
.pagetabs svg {
    margin-left: 9px;
}

/* status bar */
.status {
    flex: none;
    height: 22px;
    border-top: 1px solid #4a4a4a;
    display: flex;
    align-items: center;
    color: #e8e8e8;
    font-size: 11.200px;
    padding: 0 0 3px 7px;
}
.st-page {
    width: 77px;
}
.st-lang {
    width: 135px;
}
.st-right {
    margin-left: auto;
    display: flex;
    align-items: center;
    padding-right: 22px;
}
.zoom {
    display: flex;
    align-items: center;
    margin-left: 17px;
}
.z-btn {
    font-weight: 700;
    font-size: 13px;
    width: 8px;
    text-align: center;
    color: #fff;
    line-height: 12px;
}
.z-track {
    position: relative;
    width: 100px;
    height: 1px;
    margin: 0 3px;
    background: #fff;
}
.z-mid {
    position: absolute;
    left: 50px;
    top: -2px;
    width: 1px;
    height: 5px;
    background: #fff;
}
.z-thumb {
    position: absolute;
    left: 52px;
    top: -5px;
    width: 5px;
    height: 11px;
    background: #fff;
}
.z-val {
    margin-left: 10px;
    width: 41px;
}
.st-right svg:last-child {
    margin-left: 14px;
}
/* what shows below the window */
.desk {
    flex: none;
    height: 3px;
    border-top: 1px solid #999;
    background: linear-gradient(90deg, #1d3338 21px, #f2f2f2 21px 180px, #1d3338 180px);
}
```
